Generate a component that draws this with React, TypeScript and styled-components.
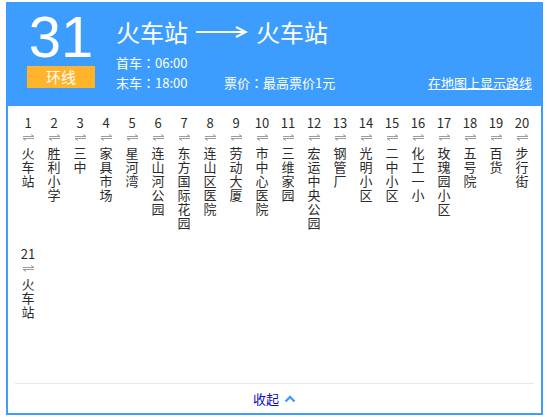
import React from "react";
import styled, { createGlobalStyle } from "styled-components";

const Global = createGlobalStyle`
  html, body { margin: 0; padding: 0; background: #fff; }
  body { font-family: "Microsoft YaHei", "Noto Sans CJK SC", sans-serif; }
`;

const BLUE = "#3d9dfe";

const Card = styled.div`
  box-sizing: border-box;
  width: 537px;
  height: 413px;
  margin: 2px 0 0 6px;
  border: 2px solid ${BLUE};
  display: flex;
  flex-direction: column;
  background: #fff;
`;

const Header = styled.div`
  box-sizing: border-box;
  height: 102px;
  flex: none;
  background: ${BLUE};
  color: #fff;
  display: flex;
  padding: 4px 9px 0 19px;
`;

const LineBlock = styled.div`
  width: 68px;
  display: flex;
  flex-direction: column;
  align-items: center;
`;

const LineNo = styled.div`
  font-family: "Liberation Sans", Arial, sans-serif;
  font-size: 58px;
  line-height: 58px;
  height: 58px;
`;

const Badge = styled.div`
  width: 68px;
  height: 22px;
  background: #ffb42b;
  color: #fff;
  font-size: 15px;
  line-height: 22px;
  text-align: center;
`;

const Info = styled.div`
  flex: 1;
  margin-left: 21px;
  display: flex;
  flex-direction: column;
`;

const Title = styled.div`
  margin-top: 9px;
  font-size: 24px;
  line-height: 30px;
  height: 30px;
  display: flex;
  align-items: center;
`;

const ArrowWrap = styled.span`
  display: inline-flex;
  margin: 0 8px;
`;

const Row = styled.div<{ $first?: boolean }>`
  font-size: 13px;
  line-height: 20px;
  display: flex;
  margin-top: ${(p) => (p.$first ? "6px" : "0")};
`;

const Cell = styled.span<{ $w?: number }>`
  width: ${(p) => (p.$w ? `${p.$w}px` : "auto")};
  flex: none;
`;

const Colon = styled.span`
  font-family: "Noto Sans CJK TC", "Noto Sans CJK SC", sans-serif;
`;

const MapLink = styled.a`
  margin-left: auto;
  color: #fff;
  text-decoration: underline;
  cursor: pointer;
`;

const Stations = styled.div`
  flex: 1;
  display: flex;
  flex-wrap: wrap;
  align-content: flex-start;
  padding: 9px 0 0 7px;
`;

const Station = styled.div`
  width: 26px;
  display: flex;
  flex-direction: column;
  align-items: center;
  margin-bottom: 16px;
  color: #2b2b2b;
`;

const Num = styled.div`
  font-size: 13px;
  line-height: 16px;
  height: 16px;
`;

const Dir = styled.div`
  height: 12px;
  display: flex;
  align-items: center;
  justify-content: center;
`;

const Name = styled.div`
  margin-top: 3px;
  width: 13px;
  font-size: 13px;
  line-height: 14px;
  word-break: break-all;
  text-align: center;
`;

const Footer = styled.div`
  flex: none;
  height: 29px;
  margin: 0 7px;
  border-top: 1px solid #e8e8e8;
  display: flex;
  align-items: center;
  justify-content: center;
  font-size: 13px;
  color: #0c0cc6;
  gap: 5px;
  cursor: pointer;
`;

const stations = [
  "火车站",
  "胜利小学",
  "三中",
  "家具市场",
  "星河湾",
  "连山河公园",
  "东方国际花园",
  "连山区医院",
  "劳动大厦",
  "市中心医院",
  "三维家园",
  "宏运中央公园",
  "钢管厂",
  "光明小区",
  "二中小区",
  "化工一小",
  "玫瑰园小区",
  "五号院",
  "百货",
  "步行街",
  "火车站",
];

const LongArrow = () => (
  <svg width="52" height="12" viewBox="0 0 52 12">
    <path d="M0 6 H50" stroke="#fff" strokeWidth="2" fill="none" />
    <path d="M40 1 L50 6 L40 11" stroke="#fff" strokeWidth="2" fill="none" />
  </svg>
);

const BothWays = () => (
  <svg width="13" height="7" viewBox="0 0 13 7">
    <path d="M1 2.5 H12 M12 2.5 L9 0.5" stroke="#9c9c9c" strokeWidth="1" fill="none" />
    <path d="M1 4.5 H12 M1 4.5 L4 6.5" stroke="#9c9c9c" strokeWidth="1" fill="none" />
  </svg>
);

const Chevron = () => (
  <svg width="12" height="8" viewBox="0 0 12 8">
    <path d="M1.5 6.5 L6 2 L10.5 6.5" stroke={BLUE} strokeWidth="2.4" fill="none" />
  </svg>
);

export default function App() {
  return (
    <>
      <Global />
      <Card>
        <Header>
          <LineBlock>
            <LineNo>31</LineNo>
            <Badge>环线</Badge>
          </LineBlock>
          <Info>
            <Title>
              火车站
              <ArrowWrap>
                <LongArrow />
              </ArrowWrap>
              火车站
            </Title>
            <Row $first>
              <Cell>
                首车<Colon>：</Colon>06:00
              </Cell>
            </Row>
            <Row>
              <Cell $w={108}>
                末车<Colon>：</Colon>18:00
              </Cell>
              <Cell>
                票价<Colon>：</Colon>最高票价1元
              </Cell>
              <MapLink>在地图上显示路线</MapLink>
            </Row>
          </Info>
        </Header>
        <Stations>
          {stations.map((s, i) => (
            <Station key={i}>
              <Num>{i + 1}</Num>
              <Dir>
                <BothWays />
              </Dir>
              <Name>{s}</Name>
            </Station>
          ))}
        </Stations>
        <Footer>
          收起
          <Chevron />
        </Footer>
      </Card>
    </>
  );
}
